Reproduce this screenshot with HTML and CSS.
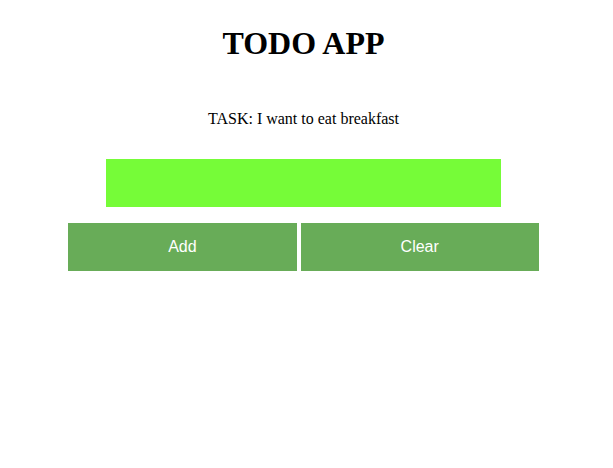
FILE: index.html
```html
<!DOCTYPE html>
<html>
<head>
<meta charset="utf-8">
<link rel="stylesheet" href="styles.css">
</head>
<body>
<div class="app">
  <h1 class="title">TODO APP</h1>
  <p class="task">TASK: I want to eat breakfast</p>
  <div class="field-row"><input class="field" type="text"></div>
  <div class="actions">
    <button class="btn">Add</button>
    <button class="btn">Clear</button>
  </div>
</div>
</body>
</html>
```
FILE: styles.css
```css
html, body { background: #fff; }
body {
  margin: 0;
  font-family: "Liberation Serif", "Times New Roman", serif;
  color: #000;
}
.app {
  width: 607px;
  padding-top: 8px;
  display: flex;
  flex-direction: column;
  align-items: center;
}
.title {
  font-size: 32px;
  font-weight: bold;
  margin: 17px 0 0;
}
.task {
  font-size: 16px;
  margin: 48px 0 0;
}
.field-row { margin-top: 31px; }
.field {
  display: block;
  width: 395px;
  height: 48px;
  box-sizing: border-box;
  border: none;
  background: #76fc38;
  outline: none;
}
.actions {
  margin-top: 16px;
  display: flex;
  gap: 4px;
}
.btn {
  height: 48px;
  padding: 0 100px;
  border: none;
  background: #68ac58;
  color: #fff;
  font-family: "Liberation Sans", Arial, sans-serif;
  font-size: 16px;
}
```
